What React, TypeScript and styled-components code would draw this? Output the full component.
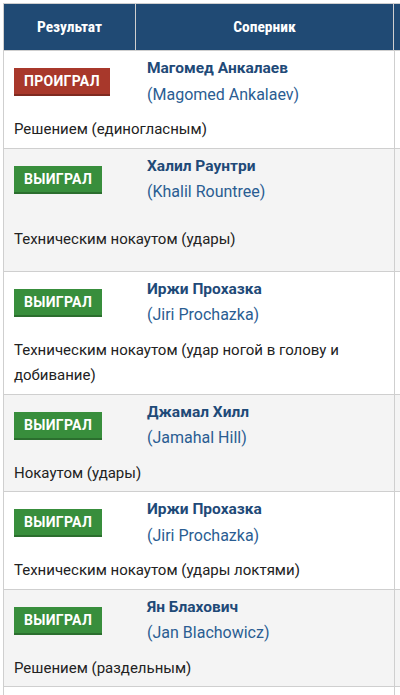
import React from "react";
import styled, { createGlobalStyle } from "styled-components";

const Global = createGlobalStyle`
  html, body { margin: 0; padding: 0; background: #fff; }
  body { overflow: hidden; font-family: Roboto, "Noto Sans", Arial, sans-serif; }
`;

const Page = styled.div`
  padding: 3px 0 0 3px;
  width: 700px;
`;

const Table = styled.div`
  border-top: 1px solid #cfcfcf;
  border-left: 1px solid #cfcfcf;
  width: 600px;
`;

const HeaderRow = styled.div`
  display: grid;
  grid-template-columns: 132px 258px 1fr;
  background: #204a74;
  border-bottom: 1px solid #cfcfcf;
  height: 46px;
`;

const HeaderCell = styled.div<{ $sep?: boolean }>`
  display: flex;
  align-items: center;
  justify-content: center;
  color: #fff;
  font-family: "Roboto Condensed", Roboto, Arial, sans-serif;
  font-weight: 700;
  font-size: 15.5px;
  border-right: ${(p) => (p.$sep ? "1px solid #cfcfcf" : "none")};
`;

const Row = styled.div<{ $alt?: boolean }>`
  display: grid;
  grid-template-columns: 391px 1fr;
  background: ${(p) => (p.$alt ? "#f4f4f4" : "#fff")};
  border-bottom: 1px solid #cfcfcf;
`;

const Main = styled.div`
  border-right: 1px solid #cfcfcf;
  display: flex;
  flex-direction: column;
`;

const Top = styled.div<{ $extra: number }>`
  display: grid;
  grid-template-columns: 132px 1fr;
  min-height: ${(p) => 61 + p.$extra * 12.75}px;
`;

const ResultCell = styled.div`
  padding: 17px 10px 0;
`;

const Badge = styled.span<{ $win: boolean }>`
  display: inline-flex;
  align-items: center;
  height: 26px;
  padding: 0 10px;
  background: ${(p) => (p.$win ? "#388e3c" : "#a8382b")};
  border-bottom: 2px solid ${(p) => (p.$win ? "#2b6e2e" : "#7f2a20")};
  color: #fff;
  font-weight: 700;
  font-size: 14px;
  letter-spacing: 0.3px;
  text-transform: uppercase;
`;

const NameCell = styled.div`
  padding: 5px 11px;
  font-size: 15px;
  line-height: 25.5px;
`;

const Name = styled.div`
  font-weight: 700;
  color: #1f4a78;
  font-size: 15.5px;
`;

const Latin = styled.div`
  color: #2a5d92;
  font-size: 16px;
`;

const Method = styled.div<{ $extra: number }>`
  padding: 5px 10px ${(p) => 5 + p.$extra * 12.75}px;
  font-size: 15px;
  line-height: 25.5px;
  color: #222;
`;

const Side = styled.div``;

type Fight = {
  win: boolean;
  ru: string;
  en: string;
  method: string;
  extra?: number;
};

const fights: Fight[] = [
  { win: false, ru: "Магомед Анкалаев", en: "(Magomed Ankalaev)", method: "Решением (единогласным)" },
  { win: true, ru: "Халил Раунтри", en: "(Khalil Rountree)", method: "Техническим нокаутом (удары)", extra: 1 },
  { win: true, ru: "Иржи Прохазка", en: "(Jiri Prochazka)", method: "Техническим нокаутом (удар ногой в голову и добивание)" },
  { win: true, ru: "Джамал Хилл", en: "(Jamahal Hill)", method: "Нокаутом (удары)" },
  { win: true, ru: "Иржи Прохазка", en: "(Jiri Prochazka)", method: "Техническим нокаутом (удары локтями)" },
  { win: true, ru: "Ян Блахович", en: "(Jan Blachowicz)", method: "Решением (раздельным)" },
  { win: true, ru: "Энтони Смит", en: "(Anthony Smith)", method: "Решением (единогласным)" },
];

export default function App() {
  return (
    <Page>
      <Global />
      <Table>
        <HeaderRow>
          <HeaderCell $sep>Результат</HeaderCell>
          <HeaderCell $sep>Соперник</HeaderCell>
          <HeaderCell />
        </HeaderRow>
        {fights.map((f, i) => (
          <Row key={i} $alt={i % 2 === 1}>
            <Main>
              <Top $extra={f.extra ?? 0}>
                <ResultCell>
                  <Badge $win={f.win}>{f.win ? "Выиграл" : "Проиграл"}</Badge>
                </ResultCell>
                <NameCell>
                  <Name>{f.ru}</Name>
                  <Latin>{f.en}</Latin>
                </NameCell>
              </Top>
              <Method $extra={f.extra ?? 0}>{f.method}</Method>
            </Main>
            <Side />
          </Row>
        ))}
      </Table>
    </Page>
  );
}
